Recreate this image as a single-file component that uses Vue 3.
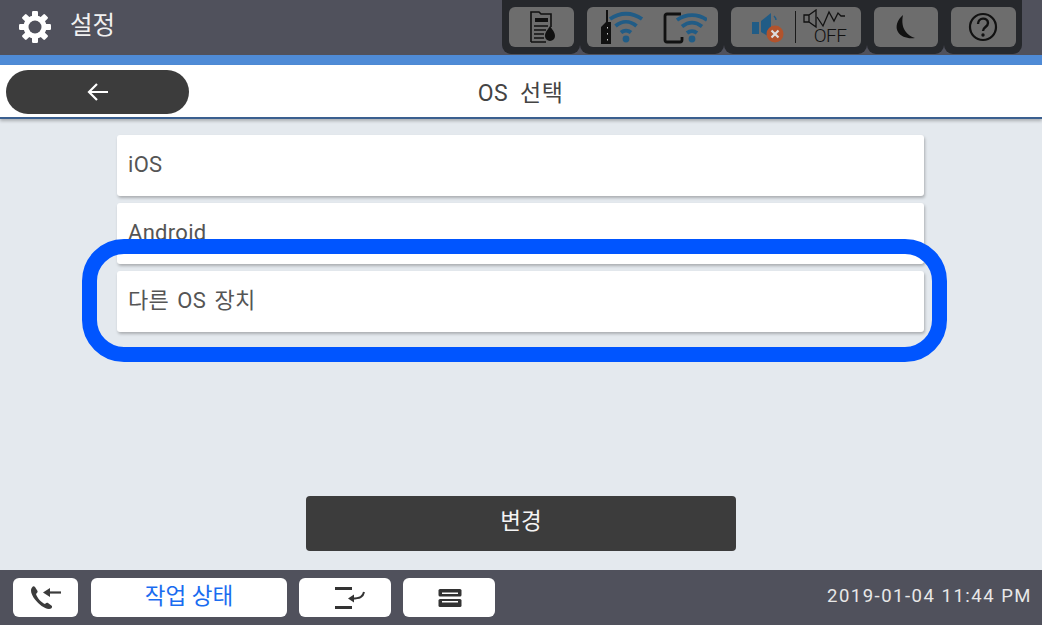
<script setup>
const items = ['iOS', 'Android', '다른 OS 장치']
</script>

<template>
  <div class="screen">
    <header class="topbar">
      <svg class="gear" viewBox="0 0 34 34" width="34" height="34">
        <g fill="#fff">
          <circle cx="17" cy="17" r="11.5" />
          <rect v-for="a in [0,45,90,135,180,225,270,315]" :key="a" x="14" y="1" width="6" height="8" rx="1.2" :transform="`rotate(${a} 17 17)`" />
        </g>
        <circle cx="17" cy="17" r="6.5" fill="#50515c" />
      </svg>
      <span class="top-title">설정</span>
      <div class="status">
        <div class="slot">
          <div class="cell doc">
            <svg viewBox="0 0 30 34" width="30" height="34">
              <g fill="none" stroke="#111" stroke-width="1.6">
                <path d="M3 26V2h8l2 2h10v13M3 32h15M3 26v6" />
                <path d="M7 10h13" stroke-width="4" />
                <path d="M6 16h14M6 20h12M6 24h10M6 28h10" />
              </g>
              <path d="M22 16c2 3.500 5 6 5 10a5 5 0 0 1-10 0c0-4 3-6.500 5-10z" fill="#111" />
            </svg>
          </div>
        </div>
        <div class="slot">
          <div class="cell net">
            <svg viewBox="0 0 46 36" width="46" height="36">
              <path d="M8 1h2v12h3v22H3V18l5-5z" fill="#111" />
              <g fill="#c8c8c8"><rect x="9" y="18" width="1" height="1.500" /><rect x="9" y="24" width="1" height="1.500" /><rect x="9" y="30" width="1" height="1.500" /></g>
              <g fill="none" stroke="#215c86" stroke-width="3.800">
                <path d="M12 10c10-7 22-7 32 0" />
                <path d="M17.500 17c6.500-5.500 14.500-5.500 21 0" />
                <path d="M23 23.500c3-2.500 7-2.500 10 0" />
              </g>
              <circle cx="28" cy="30" r="3.400" fill="#215c86" />
            </svg>
            <svg viewBox="0 0 46 36" width="46" height="36">
              <path d="M20 5H6a2 2 0 0 0-2 2v24a2 2 0 0 0 2 2h13a2 2 0 0 0 2-2v-3" fill="none" stroke="#111" stroke-width="2.800" />
              <g fill="none" stroke="#215c86" stroke-width="3.800">
                <path d="M16 11c9-6.500 21-6.500 30 0" />
                <path d="M21 17.500c6.500-5 13.500-5 20 0" />
                <path d="M26 24c3-2.500 7-2.500 10 0" />
              </g>
              <circle cx="31" cy="30" r="3.400" fill="#215c86" />
            </svg>
          </div>
        </div>
        <div class="slot">
          <div class="cell sound">
            <svg viewBox="0 0 38 36" width="38" height="36">
              <path d="M5 13h7v12H5zM14 12l10-8v25l-10-6z" fill="#215c86" />
              <path d="M27 7c1 1 2 3 2 4" fill="none" stroke="#215c86" stroke-width="1.500" />
              <circle cx="28" cy="25" r="8.500" fill="#b2532c" />
              <path d="M24.500 21.500l7 7M31.500 21.500l-7 7" stroke="#ddd" stroke-width="2.200" />
            </svg>
            <i class="divider"></i>
            <div class="off-wrap">
              <svg viewBox="0 0 44 20" width="44" height="20">
                <path d="M1 6h5v7H1zM6 6l7-5v17l-7-5" fill="none" stroke="#111" stroke-width="1.300" />
                <path d="M14 8l6 9 6-14 5 9 4-8 3 3h4" fill="none" stroke="#111" stroke-width="1.300" />
              </svg>
              <span class="off">OFF</span>
            </div>
          </div>
        </div>
        <div class="slot">
          <div class="cell moon">
            <svg viewBox="0 0 22 26" width="22" height="26">
              <path d="M8 1C2 6 0 13 3 18c3 5 10 7 17 6C13 22 5 15 8 1z" fill="#111" />
            </svg>
          </div>
        </div>
        <div class="slot">
          <div class="cell">
            <svg viewBox="0 0 30 30" width="30" height="30">
              <circle cx="15" cy="15" r="13" fill="none" stroke="#111" stroke-width="2.200" />
              <path d="M10 12c0-7 10-7 10-1 0 4-5 4-5 8" fill="none" stroke="#111" stroke-width="2.400" />
              <circle cx="15" cy="23" r="1.700" fill="#111" />
            </svg>
          </div>
        </div>
      </div>
    </header>
    <div class="band"></div>
    <div class="header">
      <button class="back">
        <svg viewBox="0 0 24 20" width="24" height="20">
          <path d="M22 10H3M11 2l-8 8 8 8" fill="none" stroke="#fff" stroke-width="2.200" />
        </svg>
      </button>
      <h1 class="title">OS 선택</h1>
    </div>
    <main class="body">
      <ul class="list">
        <li v-for="item in items" :key="item" class="item">{{ item }}</li>
      </ul>
      <button class="change">변경</button>
      <div class="ring"></div>
    </main>
    <footer class="bottom">
      <button class="bbtn b-phone">
        <svg viewBox="0 0 34 26" width="34" height="26">
          <path d="M3 2.500c-2 2-1 7 3 12s9 9 14 9.500c2 0 3.500-1 3-3l-4-3c-1-.7-2 0-3 1-3-1-8-6-9-10 1-1 2-2 1.500-3L6 2c-1-1-2-1-3 .5z" fill="#3c3c3c" />
          <path d="M32 7.500H18" stroke="#3c3c3c" stroke-width="2.200" />
          <path d="M14 7.500l7-4.500v9z" fill="#3c3c3c" />
        </svg>
      </button>
      <button class="bbtn b-status">작업 상태</button>
      <button class="bbtn b-tray">
        <svg viewBox="0 0 32 22" width="32" height="22">
          <path d="M2 1.500h17M2 20.500h17" stroke="#333" stroke-width="3" />
          <path d="M31 5c-1 5-4 6.500-12 6.500" fill="none" stroke="#333" stroke-width="2" />
          <path d="M15 11.500l6-4v8z" fill="#333" />
        </svg>
      </button>
      <button class="bbtn b-stack">
        <svg viewBox="0 0 24 22" width="24" height="22">
          <rect x="0.500" y="2" width="23" height="7.500" rx="1.500" fill="#333" />
          <rect x="0.500" y="12" width="23" height="8" rx="1.500" fill="#333" />
          <rect x="4" y="5.500" width="16" height="1.500" fill="#fff" />
          <rect x="4" y="14" width="16" height="1.500" fill="#fff" />
        </svg>
      </button>
      <span class="clock">2019-01-04 11:44 PM</span>
    </footer>
  </div>
</template>

<style scoped>
.screen {
  width: 1042px;
  height: 625px;
  display: flex;
  flex-direction: column;
  overflow: hidden;
  font-family: "Roboto", "Noto Sans CJK KR", sans-serif;
  background: #e4e9ee;
}
.topbar {
  height: 55px;
  flex: none;
  background: #50515c;
  display: flex;
  align-items: flex-start;
  padding: 0 20px 0 18px;
  box-sizing: border-box;
}
.gear { margin-top: 10px; }
.top-title {
  margin: 8px 0 0 18px;
  color: #f0f0f0;
  font-size: 24.500px;
  line-height: 36px;
}
.status {
  margin-left: auto;
  display: flex;
}
.slot {
  height: 54px;
  box-sizing: border-box;
  padding: 7px 6.500px 7px;
  background: #26282c;
  border-radius: 0 0 9px 9px;
}
.cell {
  width: 65px;
  height: 40px;
  background: #6d6d6d;
  border-radius: 6px;
  display: flex;
  align-items: center;
  justify-content: center;
}
.cell.doc { padding-left: 3px; box-sizing: border-box; }
.cell.moon { width: 64px; padding-left: 1px; box-sizing: border-box; }
.cell.net {
  width: 131px;
  justify-content: flex-start;
  padding-left: 11px;
  gap: 17px;
  box-sizing: border-box;
}
.cell.sound {
  width: 130px;
  justify-content: flex-start;
  gap: 10px;
  padding-left: 16px;
  box-sizing: border-box;
}
.divider {
  width: 1px;
  height: 32px;
  flex: none;
  background: #1a1a1a;
}
.off-wrap {
  width: 44px;
  height: 36px;
  flex: none;
  display: flex;
  flex-direction: column;
  align-items: flex-end;
  padding-right: 3px;
  box-sizing: border-box;
}
.off {
  margin-top: -2px;
  font-size: 19px;
  font-weight: 300;
  line-height: 18px;
  letter-spacing: -0.5px;
  color: #111;
}
.band {
  height: 10px;
  flex: none;
  background: #4f8bd6;
}
.header {
  height: 52px;
  flex: none;
  background: #fff;
  border-bottom: 2px solid #3a5f8f;
  box-shadow: 0 2px 3px rgba(0, 0, 0, 0.25);
  display: flex;
  align-items: center;
  justify-content: center;
  position: relative;
  z-index: 1;
}
.back {
  position: absolute;
  left: 6px;
  top: 5px;
  width: 183px;
  height: 44px;
  border: 0;
  border-radius: 22px;
  background: #3c3c3c;
  display: flex;
  align-items: center;
  justify-content: center;
  padding: 0;
}
.title {
  margin: 0;
  font-size: 23px;
  font-weight: 400;
  color: #444;
  letter-spacing: 0.4px;
  word-spacing: 6px;
  padding-right: 1px;
}
.body {
  flex: 1;
  position: relative;
  display: flex;
  flex-direction: column;
  align-items: center;
  padding-top: 16px;
}
.list {
  list-style: none;
  margin: 0 1px 0 0;
  padding: 0;
  width: 807px;
  display: flex;
  flex-direction: column;
  gap: 7px;
}
.item {
  height: 61px;
  box-sizing: border-box;
  padding: 15px 11px 0;
  background: #fff;
  border-radius: 3px;
  box-shadow: 1px 2px 3px rgba(0, 0, 0, 0.25);
  font-size: 22px;
  line-height: 30px;
  color: #555;
  letter-spacing: 0.3px;
  word-spacing: 2.500px;
}
.change {
  margin-top: 164px;
  width: 430px;
  height: 55px;
  border: 0;
  border-radius: 4px;
  background: #3c3c3c;
  color: #f4f4f4;
  font: inherit;
  font-size: 22.500px;
  padding: 0 0 10px;
}
.ring {
  position: absolute;
  left: 82px;
  top: 120px;
  width: 865px;
  height: 123px;
  box-sizing: border-box;
  border: 15px solid #0055ff;
  border-radius: 42px;
}
.bottom {
  height: 55px;
  flex: none;
  background: #50515c;
  display: flex;
  align-items: flex-start;
  padding: 8px 11px 0 13px;
  box-sizing: border-box;
}
.bbtn {
  height: 39px;
  border: 0;
  border-radius: 6px;
  background: #fff;
  padding: 0;
  display: flex;
  align-items: center;
  justify-content: center;
}
.b-phone { width: 65px; }
.b-status {
  width: 196px;
  margin-left: 13px;
  font: inherit;
  font-size: 22.500px;
  color: #1a6cf0;
  padding-bottom: 8px;
}
.b-tray { width: 92px; margin-left: 12px; padding-left: 8px; box-sizing: border-box; }
.b-stack { width: 92px; margin-left: 12px; padding-left: 2px; box-sizing: border-box; }
.clock {
  margin-left: auto;
  margin-right: -1px;
  color: #e8e8e8;
  font-size: 18.500px;
  line-height: 37px;
  letter-spacing: 1.500px;
}
</style>
